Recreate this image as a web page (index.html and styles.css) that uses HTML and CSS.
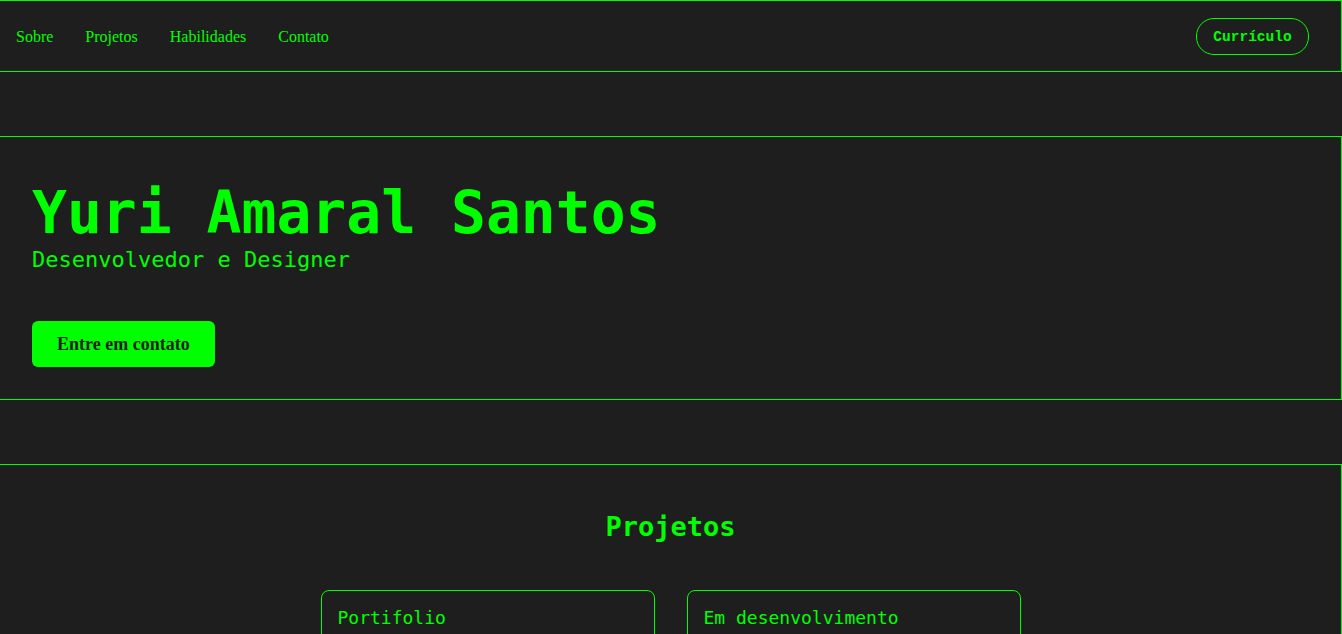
FILE: index.html
```html
<!DOCTYPE html>
<html lang="pt-BR">
<head>
<meta charset="utf-8">
<title>Yuri Amaral Santos</title>
<link rel="stylesheet" href="styles.css">
</head>
<body>
<header class="topbar">
  <nav class="nav">
    <a class="nav-link" href="#sobre">Sobre</a>
    <a class="nav-link" href="#projetos">Projetos</a>
    <a class="nav-link" href="#habilidades">Habilidades</a>
    <a class="nav-link" href="#contato">Contato</a>
  </nav>
  <a class="cv-btn" href="#">Currículo</a>
</header>

<section class="hero" id="sobre">
  <h1 class="hero-name">Yuri Amaral Santos</h1>
  <p class="hero-role">Desenvolvedor e Designer</p>
  <a class="hero-btn" href="#contato">Entre em contato</a>
</section>

<section class="projects" id="projetos">
  <h2 class="projects-title">Projetos</h2>
  <div class="cards">
    <div class="card"><h3 class="card-title">Portifolio</h3></div>
    <div class="card"><h3 class="card-title">Em desenvolvimento</h3></div>
  </div>
</section>
</body>
</html>
```
FILE: styles.css
```css
html, body {
  margin: 0;
  padding: 0;
  background: #1e1e1e;
}
body {
  font-family: "Liberation Serif", "Times New Roman", serif;
  color: #00ff00;
}
a { text-decoration: none; color: inherit; }

.topbar {
  height: 68px;
  border-top: 1px solid #00ff00;
  border-right: 1px solid #00ff00;
  border-bottom: 1px solid #00ff00;
  display: flex;
  align-items: center;
  justify-content: space-between;
  padding: 2px 32px 0 16px;
}
.nav {
  display: flex;
  gap: 32px;
}
.nav-link {
  font-size: 16px;
  color: #00ff00;
}
.cv-btn {
  font-family: "Liberation Mono", "Courier New", monospace;
  font-weight: bold;
  font-size: 14.5px;
  border: 1px solid #00ff00;
  border-radius: 18px;
  height: 35px;
  width: 111px;
  display: flex;
  align-items: center;
  justify-content: center;
  margin-top: -2px;
  padding-top: 2px;
  box-sizing: border-box;
  height: 37px;
  width: 113px;
}

.hero {
  margin-top: 64px;
  border-top: 1px solid #00ff00;
  border-right: 1px solid #00ff00;
  border-bottom: 1px solid #00ff00;
  padding: 42px 32px 32px;
  display: flex;
  flex-direction: column;
  align-items: flex-start;
}
.hero-name {
  font-family: "DejaVu Sans Mono", monospace;
  font-size: 58px;
  font-weight: bold;
  margin: 0;
  line-height: normal;
}
.hero-role {
  font-family: "DejaVu Sans Mono", monospace;
  font-size: 22px;
  margin: 0 0 48px 0;
  line-height: 1.2;
}
.hero-btn {
  background: #00ff00;
  color: #1e1e1e;
  font-weight: bold;
  font-size: 18px;
  padding: 12px 25px;
  border-radius: 6px;
  line-height: 22px;
}

.projects {
  margin-top: 64px;
  border-top: 1px solid #00ff00;
  border-right: 1px solid #00ff00;
  padding: 46px 0 0;
}
.projects-title {
  font-family: "DejaVu Sans Mono", monospace;
  font-size: 27px;
  font-weight: bold;
  text-align: center;
  margin: 0 0 48px;
}
.cards {
  display: flex;
  justify-content: center;
  gap: 32px;
}
.card {
  width: 300px;
  height: 120px;
  border: 1px solid #00ff00;
  border-radius: 8px;
  padding: 16px;
}
.card-title {
  font-family: "DejaVu Sans Mono", monospace;
  font-size: 18px;
  font-weight: normal;
  margin: 0;
}
```
